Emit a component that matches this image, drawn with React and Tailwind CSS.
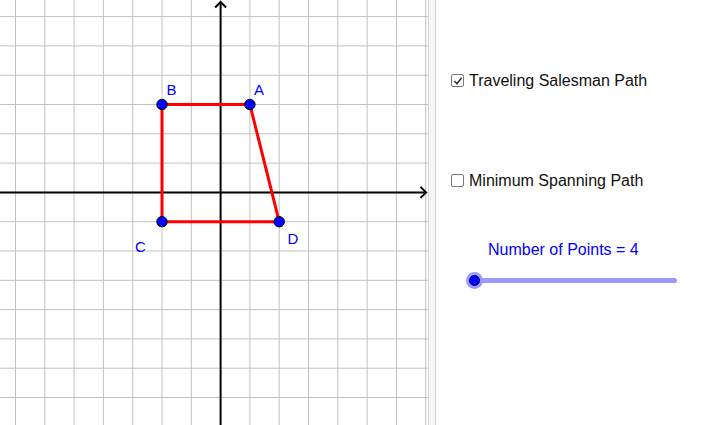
import React from 'react';

const U = 29.3;
const OX = 220.6;
const OY = 192.4;

const toX = (x) => OX + x * U;
const toY = (y) => OY - y * U;

const points = [
  { name: 'A', x: 1, y: 3, lx: 254, ly: 95 },
  { name: 'B', x: -2, y: 3, lx: 166.5, ly: 95 },
  { name: 'C', x: -2, y: -1, lx: 135, ly: 252 },
  { name: 'D', x: 2, y: -1, lx: 287.5, ly: 243.5 },
];

function Graph() {
  const vLines = [];
  for (let k = -7; k <= 7; k++) vLines.push(toX(k));
  const hLines = [];
  for (let k = -7; k <= 7; k++) hLines.push(toY(k));
  const [A, B, C, D] = points;

  return (
    <svg width="428" height="425" className="block shrink-0">
      <rect width="428" height="425" fill="#ffffff" />
      {vLines.map((x, i) => (
        <line key={'v' + i} x1={x} y1="0" x2={x} y2="425" stroke="#c0c0c0" strokeWidth="1" />
      ))}
      {hLines.map((y, i) => (
        <line key={'h' + i} x1="0" y1={y} x2="428" y2={y} stroke="#c0c0c0" strokeWidth="1" />
      ))}
      {/* axes */}
      <line x1="0" y1={OY} x2="426" y2={OY} stroke="#000" strokeWidth="2" />
      <line x1={OX} y1="2" x2={OX} y2="425" stroke="#000" strokeWidth="2" />
      <polyline points={`420.5,${OY - 5.5} 426,${OY} 420.5,${OY + 5.5}`} fill="none" stroke="#000" strokeWidth="2" />
      <polyline points={`${OX - 5.5},7.5 ${OX},2 ${OX + 5.5},7.5`} fill="none" stroke="#000" strokeWidth="2" />
      {/* path */}
      <polyline
        points={[B, A, D, C, B].map((p) => `${toX(p.x)},${toY(p.y)}`).join(' ')}
        fill="none"
        stroke="#ff0000"
        strokeWidth="3"
        strokeLinejoin="round"
      />
      {points.map((p) => (
        <g key={p.name}>
          <circle cx={toX(p.x)} cy={toY(p.y)} r="5.2" fill="#0000ff" stroke="#000" strokeWidth="1" />
          <text x={p.lx} y={p.ly} fill="#0000ff" fontSize="15" fontFamily="'Liberation Sans', Arial, sans-serif">
            {p.name}
          </text>
        </g>
      ))}
    </svg>
  );
}

function CheckBox({ checked }) {
  return (
    <div className="w-[13px] h-[13px] rounded-[2px] border-[1.5px] border-[#7a7a7a] bg-white flex items-center justify-center shrink-0">
      {checked && (
        <svg width="10" height="10" viewBox="0 0 10 10">
          <polyline points="1.5,5 4,7.8 8.6,1.8" fill="none" stroke="#333" strokeWidth="1.5" />
        </svg>
      )}
    </div>
  );
}

export default function App() {
  return (
    <div className="flex w-[725px] h-[425px] overflow-hidden bg-white" style={{ fontFamily: "'Liberation Sans', Arial, sans-serif" }}>
      <Graph />
      <div className="w-[8px] h-full shrink-0 border-l border-[#d6d6d6] border-r border-r-[#d0d0d0] bg-[#f6f6f6]" />
      <div className="flex-1 flex flex-col text-[16px] leading-[18px] text-[#111]">
        <div className="flex items-center gap-[5px] pl-[15px] mt-[71.5px]">
          <CheckBox checked />
          <span>Traveling Salesman Path</span>
        </div>
        <div className="flex items-center gap-[5px] pl-[15px] mt-[82px]">
          <CheckBox />
          <span>Minimum Spanning Path</span>
        </div>
        <div className="pl-[52px] mt-[51px] text-[#0000ff]">Number of Points = 4</div>
        <div className="relative ml-[38px] mt-[19px] w-[203px] h-[5.5px] rounded-full bg-[#9999ff]">
          <div className="absolute left-[-8.5px] top-[-5.75px] w-[17px] h-[17px] rounded-full bg-[#9999ff] flex items-center justify-center">
            <div className="w-[11px] h-[11px] rounded-full bg-[#0000ff] border border-[#000066]" />
          </div>
        </div>
      </div>
    </div>
  );
}
